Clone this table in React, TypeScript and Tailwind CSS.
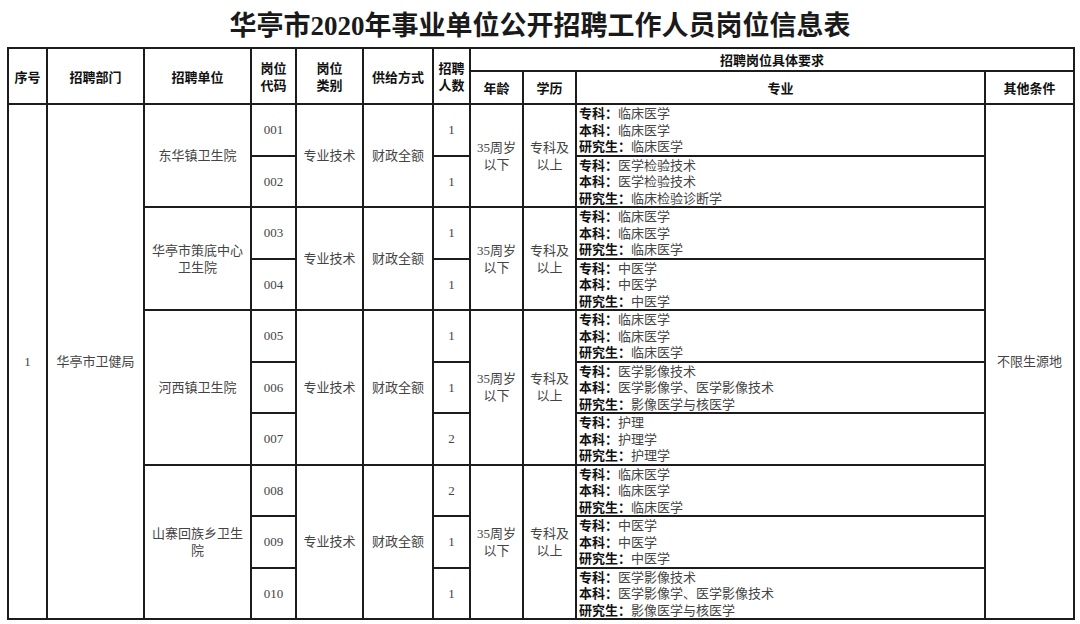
const rows = [
  { code: '001', count: '1', major: ['临床医学', '临床医学', '临床医学'] },
  { code: '002', count: '1', major: ['医学检验技术', '医学检验技术', '临床检验诊断学'] },
  { code: '003', count: '1', major: ['临床医学', '临床医学', '临床医学'] },
  { code: '004', count: '1', major: ['中医学', '中医学', '中医学'] },
  { code: '005', count: '1', major: ['临床医学', '临床医学', '临床医学'] },
  { code: '006', count: '1', major: ['医学影像技术', '医学影像学、医学影像技术', '影像医学与核医学'] },
  { code: '007', count: '2', major: ['护理', '护理学', '护理学'] },
  { code: '008', count: '2', major: ['临床医学', '临床医学', '临床医学'] },
  { code: '009', count: '1', major: ['中医学', '中医学', '中医学'] },
  { code: '010', count: '1', major: ['医学影像技术', '医学影像学、医学影像技术', '影像医学与核医学'] },
]

// unit groups: first row index -> name lines + span
const groups: Record<number, { name: string[]; span: number }> = {
  0: { name: ['东华镇卫生院'], span: 2 },
  2: { name: ['华亭市策底中心', '卫生院'], span: 2 },
  4: { name: ['河西镇卫生院'], span: 3 },
  7: { name: ['山寨回族乡卫生', '院'], span: 3 },
}

const labels = ['专科', '本科', '研究生']

const th = 'border-2 border-[#1c1c1c] p-0 text-[13px] font-bold text-[#111] leading-[17px] text-center align-middle'
const td = 'border-2 border-[#1c1c1c] p-0 text-[13px] text-[#444] leading-[17px] text-center align-middle'

export default function App() {
  return (
    <div
      className="w-[1080px] h-[624px] bg-white overflow-hidden"
      style={{ fontFamily: '"Liberation Serif", "Noto Sans CJK SC", serif' }}
    >
      <h1 className="h-[47px] flex items-center justify-center pt-[6px] text-[27px] font-bold text-[#1a1a1a]">
        华亭市2020年事业单位公开招聘工作人员岗位信息表
      </h1>
      <table className="ml-[7px] w-[1066px] table-fixed border-collapse">
        <colgroup>
          <col className="w-[39px]" />
          <col className="w-[97px]" />
          <col className="w-[107px]" />
          <col className="w-[45px]" />
          <col className="w-[67px]" />
          <col className="w-[70px]" />
          <col className="w-[37px]" />
          <col className="w-[53px]" />
          <col className="w-[53px]" />
          <col className="w-[409px]" />
          <col className="w-[89px]" />
        </colgroup>
        <thead style={{ fontFamily: '"Noto Sans CJK SC", sans-serif' }}>
          <tr className="h-[23px]">
            <th rowSpan={2} className={th}>序号</th>
            <th rowSpan={2} className={th}>招聘部门</th>
            <th rowSpan={2} className={th}>招聘单位</th>
            <th rowSpan={2} className={th}>岗位<br />代码</th>
            <th rowSpan={2} className={th}>岗位<br />类别</th>
            <th rowSpan={2} className={th}>供给方式</th>
            <th rowSpan={2} className={th}>招聘<br />人数</th>
            <th colSpan={4} className={th + ' text-[12px]'}>招聘岗位具体要求</th>
          </tr>
          <tr className="h-[33px]">
            <th className={th}>年龄</th>
            <th className={th}>学历</th>
            <th className={th}>专业</th>
            <th className={th}>其他条件</th>
          </tr>
        </thead>
        <tbody>
          {rows.map((r, i) => {
            const g = groups[i]
            return (
              <tr key={r.code} className="h-[51.5px]">
                {i === 0 && (
                  <>
                    <td rowSpan={10} className={td}>1</td>
                    <td rowSpan={10} className={td}>华亭市卫健局</td>
                  </>
                )}
                {g && (
                  <td rowSpan={g.span} className={td}>
                    {g.name.map((n) => (
                      <div key={n}>{n}</div>
                    ))}
                  </td>
                )}
                <td className={td}>{r.code}</td>
                {g && (
                  <>
                    <td rowSpan={g.span} className={td}>专业技术</td>
                    <td rowSpan={g.span} className={td}>财政全额</td>
                  </>
                )}
                <td className={td}>{r.count}</td>
                {g && (
                  <>
                    <td rowSpan={g.span} className={td}>
                      35周岁<br />以下
                    </td>
                    <td rowSpan={g.span} className={td}>
                      专科及<br />以上
                    </td>
                  </>
                )}
                <td className={td + ' !text-left !pl-[2px]'}>
                  {r.major.map((m, k) => (
                    <div key={k} className="h-[16.5px] leading-[16.5px] whitespace-nowrap">
                      <span
                        className="font-bold text-[#111]"
                        style={{ fontFamily: '"Noto Sans CJK SC", sans-serif' }}
                      >
                        {labels[k]}：
                      </span>
                      {m}
                    </div>
                  ))}
                </td>
                {i === 0 && (
                  <td rowSpan={10} className={td}>不限生源地</td>
                )}
              </tr>
            )
          })}
        </tbody>
      </table>
    </div>
  )
}
